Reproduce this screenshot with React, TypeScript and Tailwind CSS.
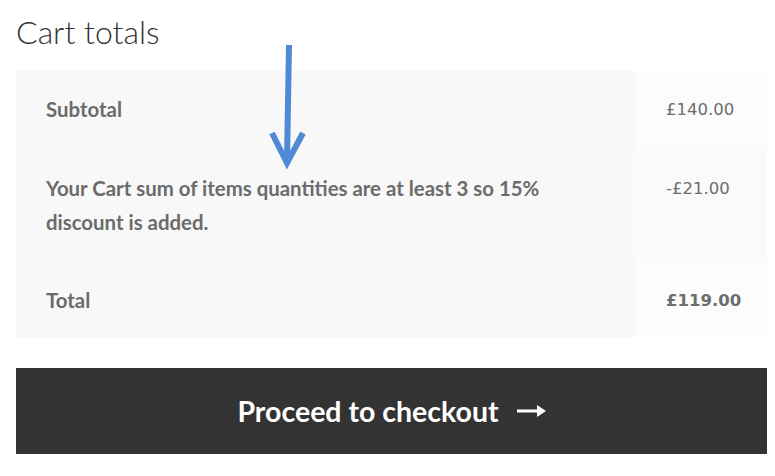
import React from 'react';

const rows = [
    {
        label: 'Subtotal',
        value: '£140.00',
        bold: false,
        bg: 'bg-[#fcfcfc]',
        pad: 'py-[21px]',
        valuePad: 'pt-[21px] pb-[19px]',
    },
    {
        label: 'Your Cart sum of items quantities are at least 3 so 15% discount is added.',
        value: '-£21.00',
        bold: false,
        bg: 'bg-[#fafafa]',
        pad: 'pt-[24px] pb-[23px]',
        valuePad: 'pt-[24px] pb-[21px]',
    },
    {
        label: 'Total',
        value: '£119.00',
        bold: true,
        bg: 'bg-[#fcfcfc]',
        pad: 'pt-[21px] pb-[20px]',
        valuePad: 'pt-[21px] pb-[18px]',
    },
];

export default function App() {
    return (
        <div className="relative w-[775px] h-[476px] bg-white overflow-hidden pl-4 pr-2 pt-[12px]">
            <h2 className="text-[32px] leading-[40px] font-light text-[#333333] font-['Lato',sans-serif] mb-[19px]">
                Cart totals
            </h2>

            <div className="grid grid-cols-[619px_1fr]">
                {rows.map((row) => (
                    <React.Fragment key={row.value}>
                        <div className={`bg-[#f8f8f8] pl-[30px] ${row.pad}`}>
                            <p className="w-[505px] text-[20.4px] leading-[34px] font-bold text-[#6b6b6b] font-['Lato',sans-serif]">
                                {row.label}
                            </p>
                        </div>
                        <div
                            className={`${row.bg} pl-[31px] ${row.valuePad} text-[16.5px] leading-[36px] text-[#6d6d6d] font-['DejaVu_Sans',sans-serif] ${row.bold ? 'font-bold' : ''}`}
                        >
                            {row.value}
                        </div>
                    </React.Fragment>
                ))}
            </div>

            <button className="mt-[31px] w-full h-[86px] bg-[#333333] text-white flex items-center justify-center gap-[18px] font-['Lato',sans-serif] font-bold text-[28.5px]">
                <span>Proceed to checkout</span>
                <svg width="29" height="14" viewBox="0 0 29 14">
                    <rect x="0" y="5.5" width="22" height="3" fill="white" />
                    <path d="M20 1 L29 7 L20 13 Z" fill="white" />
                </svg>
            </button>

            {/* annotation arrow */}
            <svg
                className="absolute left-0 top-0 pointer-events-none"
                width="775"
                height="476"
                viewBox="0 0 775 476"
            >
                <line x1="289" y1="45" x2="287" y2="160" stroke="#5089d6" strokeWidth="6" />
                <polyline
                    points="272,133 287,163 303,133"
                    fill="none"
                    stroke="#5089d6"
                    strokeWidth="6"
                    strokeLinejoin="miter"
                />
            </svg>
        </div>
    );
}
